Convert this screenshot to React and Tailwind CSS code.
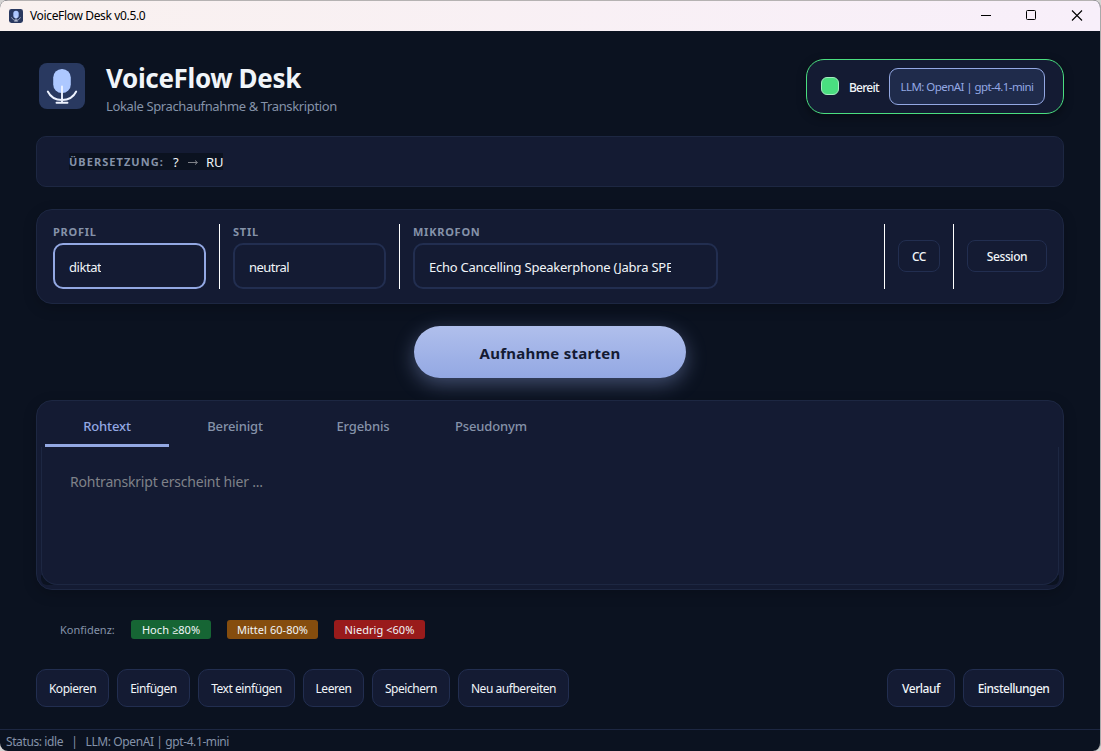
import clsx from 'clsx';

const selects = [
  { label: 'PROFIL', value: 'diktat', active: true, width: 'w-[153px]', tracking: 'tracking-[-0.45px]' },
  { label: 'STIL', value: 'neutral', width: 'w-[153px]', tracking: 'tracking-[-0.55px]' },
  {
    label: 'MIKROFON',
    value: 'Echo Cancelling Speakerphone (Jabra SPEAK)',
    width: 'w-[305px]',
    tracking: 'tracking-[-0.24px]',
  },
];

const tabs = ['Rohtext', 'Bereinigt', 'Ergebnis', 'Pseudonym'];

const levels = [
  { label: 'Hoch ≥80%', color: 'bg-[#166534]', width: 'w-20' },
  { label: 'Mittel 60-80%', color: 'bg-[#854d0e]', width: 'w-[91px]' },
  { label: 'Niedrig <60%', color: 'bg-[#991b1b]', width: 'w-[91px]' },
];

const actions = [
  { label: 'Kopieren', width: 'w-[73px]' },
  { label: 'Einfügen', width: 'w-[73px]' },
  { label: 'Text einfügen', width: 'w-[97px]' },
  { label: 'Leeren', width: 'w-[61px]' },
  { label: 'Speichern', width: 'w-[78px]' },
  { label: 'Neu aufbereiten', width: 'w-[111px]' },
];

function MicIcon({ className }) {
  return (
    <svg viewBox="0 0 46 46" fill="none" className={className}>
      <rect width="46" height="46" rx="8" fill="#293960" />
      <rect x="14.2" y="6" width="17.6" height="24" rx="8.6" fill="#adc8ff" />
      <path
        d="M8.8 28.5C11.5 34 16.5 37 23 37s11.500-3 14.200-8.500M23 23.500V39.500M17.500 39.700h11"
        stroke="#eef3ff"
        strokeWidth="1.9"
        strokeLinecap="round"
      />
    </svg>
  );
}

function TitleBar() {
  return (
    <div className="flex h-[31px] shrink-0 items-center border-t border-[#b5b2b2] bg-linear-to-r from-[#f9f1ef] to-[#f8effa] text-black">
      <MicIcon className="ml-[9px] size-3.5" />
      <span className="ml-[7px] text-xs tracking-[-0.35px]">VoiceFlow Desk v0.5.0</span>
      <div className="ml-auto flex items-center">
        <svg width="120" height="30" fill="none" stroke="#000" shapeRendering="geometricPrecision">
          <path d="M1 14.500h10" />
          <rect x="46.500" y="9.500" width="9" height="9" rx="1" />
          <path d="M92 9.500l10 10M102 9.500l-10 10" strokeWidth="1.100" />
        </svg>
      </div>
    </div>
  );
}

function Separator() {
  return <div className="h-[65px] w-px bg-white" />;
}

function Button({ width, className, children }) {
  return (
    <button
      className={clsx(
        'flex shrink-0 items-center justify-center border border-[#222e50] bg-[#141b33] text-xs whitespace-nowrap text-[#f1f5f9]',
        width,
        className
      )}
    >
      {children}
    </button>
  );
}

function Header() {
  return (
    <header className="flex h-[55px] items-center">
      <MicIcon className="mb-0.5 ml-[3px] size-[46px]" />
      <div className="ml-[21px] pt-[3px]">
        <h1 className="text-[26px] leading-8 font-bold tracking-[-0.35px] text-[#f1f5f9]">VoiceFlow Desk</h1>
        <p className="mt-[3px] text-[13px] leading-[18px] tracking-[-0.37px] text-[#8592a9]">
          Lokale Sprachaufnahme &amp; Transkription
        </p>
      </div>
      <div className="ml-auto flex h-[55px] w-[258px] items-center rounded-[18px] border border-[#4ade80] bg-[#141b33] shadow-[0_3px_10px_rgba(0,0,0,0.4)]">
        <span className="mb-px ml-3.5 size-[18px] rounded-md border border-[#a5eec0] bg-[#4ade80]" />
        <span className="ml-2.5 w-10 pt-0.5 text-xs font-medium tracking-[-0.75px] text-[#f1f5f9]">Bereit</span>
        <span className="flex h-[37px] w-[156px] items-center justify-center rounded-[9px] border border-[#93a8e3] bg-[#1f2b4b] pt-px text-[11.5px] tracking-[-0.56px] whitespace-nowrap text-[#93a8e3]">
          LLM: OpenAI | gpt-4.1-mini
        </span>
      </div>
    </header>
  );
}

function Controls() {
  return (
    <section className="mt-[22px] flex h-[95px] items-center rounded-2xl border border-[#1d2742] bg-[#141b33] px-4 shadow-[0_4px_14px_rgba(0,0,0,0.2)]">
      {selects.map(({ label, value, active, width, tracking }) => (
        <div key={label} className="flex items-center">
          <div className="h-[65px]">
            <div className="h-[19px] text-[11px] leading-[15px] font-bold tracking-[0.75px] text-[#8592a9]">{label}</div>
            <div
              className={clsx(
                'flex h-[46px] items-center rounded-[10px] border-2 pr-[45px] pl-3.5',
                width,
                active ? 'border-[#93a8e3]' : 'border-[#222e50]'
              )}
            >
              <span className={clsx('overflow-hidden pt-[3px] text-[13px] whitespace-nowrap text-[#f1f5f9]', tracking)}>
                {value}
              </span>
            </div>
          </div>
          {label !== 'MIKROFON' && (
            <div className="px-[13px]">
              <Separator />
            </div>
          )}
        </div>
      ))}
      <div className="ml-auto flex items-center gap-[13px]">
        <Separator />
        <Button width="w-[42px]" className="mb-0.5 h-8 rounded-lg pt-0.5 font-medium tracking-[-0.4px]">CC</Button>
        <Separator />
        <Button width="w-20" className="mb-0.5 h-8 rounded-lg pt-0.5 font-medium tracking-[-0.4px]">Session</Button>
      </div>
    </section>
  );
}

function Transcript() {
  return (
    <section className="mt-[22px] flex h-[190px] flex-col rounded-2xl border border-[#1d2742] bg-[#141b33] px-1 pb-1 shadow-[0_4px_14px_rgba(0,0,0,0.2)]">
      <div className="flex h-[46px] gap-1 px-1">
        {tabs.map((tab, i) => (
          <div
            key={tab}
            className={clsx(
              'flex w-[124px] items-center justify-center border-b-3 pt-[9px] text-[13px] font-medium tracking-[-0.15px]',
              i === 0 ? 'border-[#93a8e3] text-[#93a8e3]' : 'border-transparent text-[#8592a9]'
            )}
          >
            {tab}
          </div>
        ))}
      </div>
      <div className="flex-1 rounded-bl-[6px] rounded-br-[6px] bg-linear-to-t from-[#0b1220] from-[10px] to-[#141b33] to-[10px]">
        <div className="h-full rounded-b-2xl border border-t-0 border-[#1d2742] bg-[#141b33] px-7 pt-[25px] text-sm tracking-[-0.2px] text-[#7f8289]">
          Rohtranskript erscheint hier ...
        </div>
      </div>
    </section>
  );
}

export default function App() {
  return (
    <div className="h-[751px] w-[1101px] overflow-hidden bg-[#d5d3d2] font-['Noto_Sans','Open_Sans',sans-serif]">
      <div className="flex h-full flex-col overflow-hidden rounded-[8px] border-r border-[#a9a9aa] bg-[#0b1220]">
        <TitleBar />
        <main className="flex flex-1 flex-col px-9 pt-7">
          <Header />
          <section className="mt-[22px] flex h-[51px] items-center rounded-[10px] border border-[#1d2742] bg-[#141b33] pl-8">
            <div className="flex h-[17px] items-center bg-[#0b1220] pt-0.5 text-[13px] text-[#f1f5f9]">
              <span className="w-[104px] text-[11px] font-bold tracking-[1.05px] whitespace-nowrap text-[#8592a9]">
                ÜBERSETZUNG:
              </span>
              <span className="w-[15px]">?</span>
              <svg className="mr-2 h-[5px] w-2.5" viewBox="0 0 10 5" fill="none" stroke="#7f8289">
                <path d="M0 2.500h9M7 0.500l2.500 2-2.500 2" />
              </svg>
              <span className="tracking-[-0.2px]">RU</span>
            </div>
          </section>
          <Controls />
          <button className="mx-auto mt-[22px] h-[52px] w-[272px] shrink-0 rounded-full bg-linear-to-b from-[#b0bfec] to-[#93a8e3] pt-[3px] text-[15px] font-bold tracking-[0.25px] text-[#141b33] shadow-[0_6px_20px_rgba(147,168,227,0.4)]">
            Aufnahme starten
          </button>
          <Transcript />
          <div className="mt-[30px] flex h-[19px] items-center gap-4 pl-6 text-[11px]">
            <span className="w-[55px] pt-0.5 text-[#8592a9]">Konfidenz:</span>
            {levels.map(({ label, color, width }) => (
              <span
                key={label}
                className={clsx(
                  'flex h-[19px] items-center justify-center rounded-[3px] pt-0.5 tracking-[0.05px] whitespace-nowrap text-[#f1f5f9]',
                  color,
                  width
                )}
              >
                {label}
              </span>
            ))}
          </div>
          <div className="mt-[30px] flex h-[38px] gap-2">
            {actions.map(({ label, width }) => (
              <Button key={label} width={width} className="rounded-[10px] pt-0.5 tracking-[-0.45px]">
                {label}
              </Button>
            ))}
            <Button width="w-[68px]" className="ml-auto rounded-[10px] pt-0.5 font-medium tracking-[-0.45px]">Verlauf</Button>
            <Button width="w-[101px]" className="rounded-[10px] pt-0.5 font-medium tracking-[-0.5px]">Einstellungen</Button>
          </div>
        </main>
        <footer className="h-[22px] shrink-0 border-t border-[#1d2742] pl-1.5 text-xs leading-[23px] tracking-[-0.4px] whitespace-pre text-[#8592a9]">
          {'Status: idle   |   LLM: OpenAI | gpt-4.1-mini'}
        </footer>
      </div>
    </div>
  );
}
